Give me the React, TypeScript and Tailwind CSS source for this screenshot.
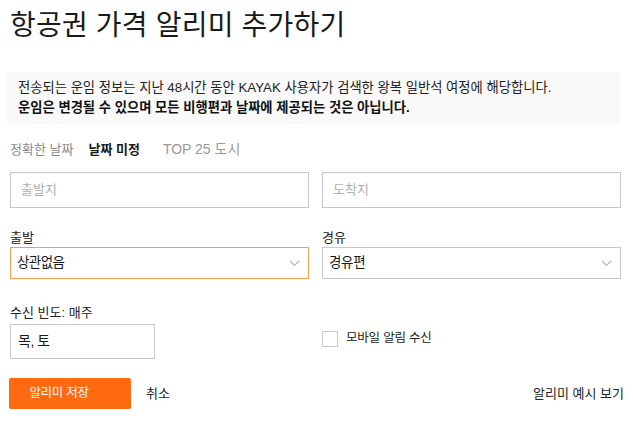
import React from "react";

const font = { fontFamily: '"Liberation Sans", "Noto Sans CJK KR", sans-serif' };

function Chevron() {
  return (
    <svg width="11" height="7" viewBox="0 0 11 7" className="text-[#b5b5b5]">
      <path d="M1 1l4.5 4.5L10 1" fill="none" stroke="currentColor" strokeWidth="1.2" />
    </svg>
  );
}

export default function App() {
  return (
    <div className="w-[633px] h-[424px] bg-white text-[#1a1a1a] overflow-hidden" style={font}>
      <div className="pl-[10px] pr-[12px] pt-[6px]">
        <h1 className="text-[28px] leading-[40px] font-normal tracking-[0.2px]">항공권 가격 알리미 추가하기</h1>
        <div className="mt-[26px] -ml-[3px] w-[613px] bg-[#f9f9f9] px-[11px] py-[6px] text-[13.3px] leading-[20px]">
          <p className="text-[#222]">전송되는 운임 정보는 지난 48시간 동안 KAYAK 사용자가 검색한 왕복 일반석 여정에 해당합니다.</p>
          <p className="font-bold text-[#111]">운임은 변경될 수 있으며 모든 비행편과 날짜에 제공되는 것은 아닙니다.</p>
        </div>
        <div className="mt-[16px] flex items-baseline text-[13px] leading-[18px]">
          <span className="text-[#888]">정확한 날짜</span>
          <span className="ml-[15px] font-bold text-[#1a1a1a]">날짜 미정</span>
          <span className="ml-[23px] text-[14px] text-[#999]">TOP 25 도시</span>
        </div>
        <div className="mt-[13px] grid grid-cols-2 gap-[13px]">
          <div className="h-[36px] border border-[#c8c8c8] flex items-center px-[10px] text-[13px] text-[#b0b0b0] shadow-[inset_0_1px_2px_rgba(0,0,0,0.04)]">출발지</div>
          <div className="h-[36px] border border-[#c8c8c8] flex items-center px-[10px] text-[13px] text-[#b0b0b0] shadow-[inset_0_1px_2px_rgba(0,0,0,0.04)]">도착지</div>
        </div>
        <div className="mt-[21px] grid grid-cols-2 gap-[13px]">
          <div>
            <div className="text-[13px] leading-[18px] text-[#222]">출발</div>
            <div className="h-[32px] border border-[#f0a04f] flex items-center justify-between pl-[6px] pr-[8px] text-[13.5px] tracking-[-0.6px] text-[#1a1a1a]">
              <span>상관없음</span>
              <Chevron />
            </div>
          </div>
          <div>
            <div className="text-[13px] leading-[18px] text-[#222]">경유</div>
            <div className="h-[32px] border border-[#c8c8c8] flex items-center justify-between pl-[6px] pr-[8px] text-[13.5px] tracking-[-0.3px] text-[#1a1a1a]">
              <span>경유편</span>
              <Chevron />
            </div>
          </div>
        </div>
        <div className="mt-[25px] grid grid-cols-2 gap-[13px]">
          <div>
            <div className="text-[13px] leading-[18px] text-[#222]">수신 빈도: 매주</div>
            <div className="mt-[2px] w-[145px] h-[35px] border border-[#c8c8c8] flex items-center px-[7px] text-[14px] tracking-[-0.5px] text-[#1a1a1a]">목, 토</div>
          </div>
          <div className="flex items-center pt-[14px]">
            <span className="w-[16px] h-[16px] border border-[#c8c8c8] bg-white" />
            <span className="ml-[8px] text-[12.5px] tracking-[-0.2px] text-[#222]">모바일 알림 수신</span>
          </div>
        </div>
        <div className="mt-[19px] flex items-center">
          <button className="-ml-[1px] w-[122px] h-[31px] rounded-[2px] bg-[#ff690f] text-white text-[12.5px] tracking-[-0.3px] pr-[22px]">알리미 저장</button>
          <span className="ml-[15px] text-[13px] text-[#222]">취소</span>
          <span className="ml-auto mr-[-3px] text-[13px] text-[#222]">알리미 예시 보기</span>
        </div>
      </div>
    </div>
  );
}
